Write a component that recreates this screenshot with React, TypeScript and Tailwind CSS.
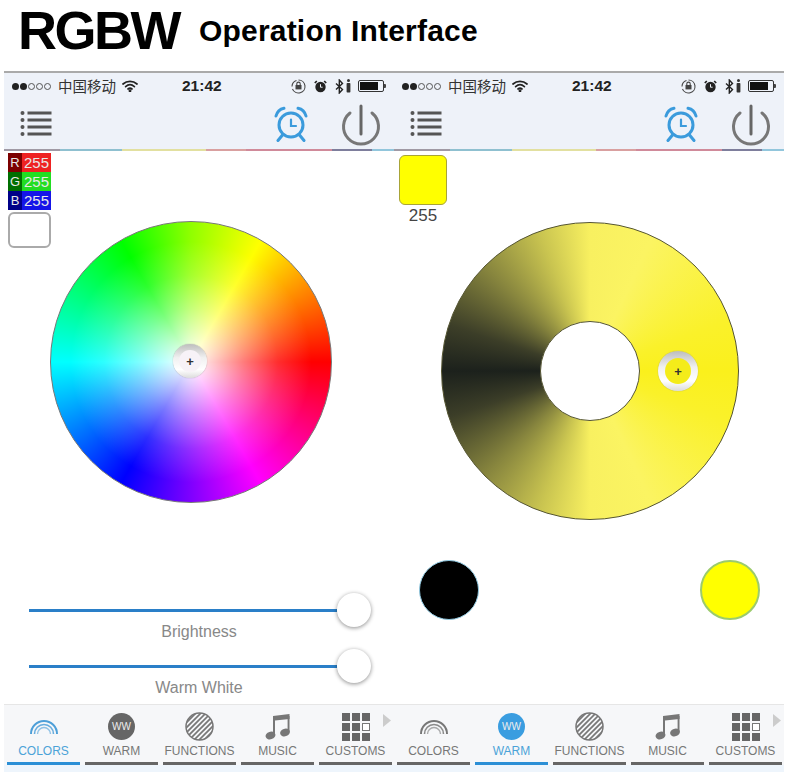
import React from "react";

const SANS = "font-['Liberation_Sans',Arial,sans-serif]";

function SignalDots() {
  return (
    <div className="flex items-center gap-[1px]">
      <span className="w-[7px] h-[7px] rounded-full bg-[#222]" />
      <span className="w-[7px] h-[7px] rounded-full bg-[#222]" />
      <span className="w-[7px] h-[7px] rounded-full border border-[#555]" />
      <span className="w-[7px] h-[7px] rounded-full border border-[#555]" />
      <span className="w-[7px] h-[7px] rounded-full border border-[#555]" />
    </div>
  );
}

function Wifi() {
  return (
    <svg width="16" height="12" viewBox="0 0 16 12" fill="none" stroke="#222" strokeWidth="1.7" strokeLinecap="round">
      <path d="M1 4 C5 0.5 11 0.5 15 4" />
      <path d="M3.6 6.6 C6.2 4.4 9.8 4.4 12.4 6.6" />
      <path d="M6 9 C7.2 8 8.8 8 10 9" />
      <circle cx="8" cy="10.8" r="0.6" fill="#222" />
    </svg>
  );
}

function StatusIcons() {
  return (
    <div className="flex items-center">
      <svg width="15" height="15" viewBox="0 0 15 15" fill="none" stroke="#444" strokeWidth="1.1">
        <path d="M7.5 1 A6.5 6.5 0 1 1 1.5 10" />
        <path d="M1 7.5 A6.5 6.5 0 0 1 5.5 1.4" />
        <rect x="4.5" y="6" width="6" height="4.4" fill="#444" stroke="none" />
        <path d="M5.8 6 V4.8 A1.7 1.7 0 0 1 9.2 4.8 V6" />
      </svg>
      <svg className="ml-[8px]" width="13" height="13" viewBox="0 0 13 13" fill="none">
        <circle cx="6.5" cy="7" r="5.2" fill="#222" />
        <path d="M0.8 3 L2.8 1 M12.2 3 L10.2 1" stroke="#222" strokeWidth="1.7" />
        <path d="M6.5 4.2 V7.2 H8.6" stroke="#eef2f9" strokeWidth="1" />
      </svg>
      <svg className="ml-[8px]" width="9" height="15" viewBox="0 0 9 15" fill="none" stroke="#222" strokeWidth="1.4">
        <path d="M1 4.5 L7.5 10.5 L4.3 14 V1 L7.5 4.5 L1 10.5" />
      </svg>
      <svg className="ml-[2px]" width="5" height="14" viewBox="0 0 5 14" fill="#333">
        <circle cx="2.5" cy="1.6" r="1.5" />
        <rect x="0.6" y="4" width="3.8" height="9.6" rx="0.8" />
      </svg>
      <div className="ml-[7px] flex items-center">
        <div className="w-[26px] h-[12px] rounded-[2px] border border-[#333] p-[1px]">
          <div className="w-[18px] h-full bg-[#111]" />
        </div>
        <span className="w-[2px] h-[4px] bg-[#444] rounded-r-[1px]" />
      </div>
    </div>
  );
}

function ListIcon() {
  return (
    <svg width="34" height="28" viewBox="0 0 34 28" fill="#555">
      {[3, 10, 17, 24].map((y) => (
        <g key={y}>
          <circle cx="3.5" cy={y} r="2" />
          <rect x="8.5" y={y - 1.5} width="24" height="3" />
        </g>
      ))}
    </svg>
  );
}

function AlarmIcon() {
  return (
    <svg width="36" height="36" viewBox="0 0 36 36" fill="none" stroke="#3b9bdc" strokeWidth="3" strokeLinecap="round">
      <circle cx="18" cy="19" r="12" />
      <path d="M3 10 C4 6 7 3 11 2.2" />
      <path d="M33 10 C32 6 29 3 25 2.2" />
      <path d="M9.5 29 L5 34.5 M26.5 29 L31 34.5" />
      <path d="M18 13.5 V20 H23" strokeWidth="2.2" />
    </svg>
  );
}

function PowerIcon() {
  return (
    <svg width="42" height="44" viewBox="0 0 42 44" fill="none" stroke="#777" strokeWidth="3" strokeLinecap="round">
      <path d="M10 9 A17.5 17.5 0 1 0 32 9" />
      <path d="M21 2 V30" stroke="#666" />
    </svg>
  );
}

function Rainbow({ color }: { color: string }) {
  return (
    <svg width="30" height="16" viewBox="0 0 30 16" fill="none" stroke={color}>
      <path d="M2 15 A13 13 0 0 1 28 15" strokeWidth="2" />
      <path d="M5.5 15 A9.5 9.5 0 0 1 24.5 15" strokeWidth="1.6" opacity="0.85" />
      <path d="M8.5 15 A6.5 6.5 0 0 1 21.5 15" strokeWidth="1.4" opacity="0.6" />
    </svg>
  );
}

function Stripes({ id }: { id: string }) {
  return (
    <svg width="29" height="29" viewBox="0 0 29 29" fill="none">
      <clipPath id={id}>
        <circle cx="14.5" cy="14.5" r="13.5" />
      </clipPath>
      <g clipPath={`url(#${id})`} stroke="#777" strokeWidth="1.7">
        {[-14, -9, -4, 1, 6, 11, 16, 21, 26].map((o) => (
          <path key={o} d={`M${o - 6} 32 L${o + 26} 0`} />
        ))}
      </g>
      <circle cx="14.5" cy="14.5" r="13.5" stroke="#777" strokeWidth="1.5" />
    </svg>
  );
}

function Music() {
  return (
    <svg width="26" height="27" viewBox="0 0 26 27" fill="#777">
      <path d="M8 3 L24.5 1 V6 L10 7.5 V22 H8 Z" />
      <path d="M22.6 3 H24.5 V19 H22.6 Z" />
      <ellipse cx="5.5" cy="22.5" rx="5" ry="3.8" transform="rotate(-18 5.5 22.5)" />
      <ellipse cx="20" cy="19.5" rx="5" ry="3.8" transform="rotate(-18 20 19.5)" />
    </svg>
  );
}

function GridIcon() {
  const cells = [0, 1, 2, 3, 4, 5, 6, 7, 8];
  return (
    <div className="grid grid-cols-[8px_8px_8px] gap-[2px]">
      {cells.map((c) => (
        <span key={c} className={c === 5 ? "h-[8px] border border-[#777] bg-white" : "h-[8px] bg-[#666]"} />
      ))}
    </div>
  );
}

function TabBar({ active, uid }: { active: number; uid: string }) {
  const labels = ["COLORS", "WARM", "FUNCTIONS", "MUSIC", "CUSTOMS"];
  const icons = [
    <Rainbow key="r" color={active === 0 ? "#4d9fd8" : "#777"} />,
    <div
      key="w"
      className={`w-[27px] h-[27px] rounded-full flex items-center justify-center text-[10px] text-[#eee] ${SANS} ${
        active === 1 ? "bg-[#3a9de0]" : "bg-[#666]"
      }`}
    >
      WW
    </div>,
    <Stripes key="s" id={uid} />,
    <Music key="m" />,
    <GridIcon key="g" />,
  ];
  return (
    <div className="relative h-[61px] bg-[#f6f7f9] border-t border-[#e6e6e6] pl-[3px] grid grid-cols-[repeat(5,73px)] gap-x-[5px]">
      {labels.map((label, i) => (
        <div key={label} className="flex flex-col items-center">
          <div className="h-[29px] mt-[7px] flex items-center justify-center">{icons[i]}</div>
          <div
            className={`mt-[2px] h-[16px] leading-[16px] whitespace-nowrap text-[12px] ${SANS} ${
              i === active ? "text-[#4ba3d8]" : "text-[#777]"
            }`}
          >
            {label}
          </div>
          <div className={`mt-[3px] w-full h-[3px] ${i === active ? "bg-[#2b8fd6]" : "bg-[#666]"}`} />
        </div>
      ))}
      <svg className="absolute right-[3px] top-[9px]" width="8" height="13" viewBox="0 0 8 13" fill="#ccc">
        <path d="M0 0 L8 6.5 L0 13 Z" />
      </svg>
    </div>
  );
}

function RainbowLine() {
  return (
    <div className="flex h-[2px]">
      <div className="w-[56px] bg-[#a09aa5]" />
      <div className="w-[62px] bg-[#8fc0d0]" />
      <div className="w-[84px] bg-[#e2e0a0]" />
      <div className="w-[40px] bg-[#d9a0a0]" />
      <div className="w-[86px] bg-[#d08a9a]" />
      <div className="w-[40px] bg-[#7e7e9c]" />
      <div className="flex-1 bg-[#92c6dc]" />
    </div>
  );
}

function Header() {
  return (
    <div className="bg-[#eef2f9] border-t-2 border-[#aaa]">
      <div className="h-[26px] flex items-center pl-[8px] pr-[8px]">
        <SignalDots />
        <span className="ml-[7px] text-[14.5px] leading-none text-[#333] font-['Noto_Sans_CJK_SC',sans-serif]">中国移动</span>
        <span className="ml-[6px]">
          <Wifi />
        </span>
        <span className={`ml-[44px] text-[15.5px] font-bold text-[#222] ${SANS}`}>21:42</span>
        <span className="ml-auto">
          <StatusIcons />
        </span>
      </div>
      <div className="h-[50px] flex items-center pl-[15px] pr-[12px]">
        <ListIcon />
        <span className="ml-auto">
          <AlarmIcon />
        </span>
        <span className="ml-[31px] mt-[3px]">
          <PowerIcon />
        </span>
      </div>
      <RainbowLine />
    </div>
  );
}

function Readout() {
  const rows = [
    ["R", "bg-[#7c0000]", "bg-[#ee2222]"],
    ["G", "bg-[#006f00]", "bg-[#22dd22]"],
    ["B", "bg-[#000088]", "bg-[#1515e8]"],
  ];
  return (
    <div className={`w-[43px] shrink-0 ml-[4px] ${SANS}`}>
      {rows.map(([c, dark, light]) => (
        <div key={c} className="flex h-[19px] leading-[19px] text-[15px] text-[#e8e8e8]">
          <span className={`w-[14px] text-center text-[13px] ${dark}`}>{c}</span>
          <span className={`flex-1 text-center ${light}`}>255</span>
        </div>
      ))}
      <div className="mt-[2px] h-[36px] rounded-[6px] border-2 border-[#aaa] bg-white" />
    </div>
  );
}

function Thumb({ box, inner, color }: { box: string; inner: string; color: string }) {
  return (
    <div
      className={`absolute ${box} rounded-full flex items-center justify-center bg-[linear-gradient(180deg,#bdbdbd,#f0f0f0_40%,#ffffff_75%,#dcdcdc)] shadow-[0_0_1px_#888]`}
    >
      <div className={`${inner} ${color} rounded-full flex items-center justify-center text-[13px] leading-none font-bold text-[#333] ${SANS}`}>
        +
      </div>
    </div>
  );
}

function Slider({ label, gap }: { label: string; gap: string }) {
  return (
    <div className={gap}>
      <div className="flex items-center ml-[25px] w-[342px]">
        <div className="flex-1 h-[3px] bg-[#2a7fc8]" />
        <div className="w-[34px] h-[34px] rounded-full bg-white shadow-[0_1px_4px_rgba(0,0,0,0.45)]" />
      </div>
      <div className={`-mt-[5px] ml-[25px] w-[340px] h-[20px] leading-[20px] text-center text-[16px] text-[#888] ${SANS}`}>{label}</div>
    </div>
  );
}

function ColorPage() {
  return (
    <div className="flex-1">
      <div className="flex pt-[2px]">
        <Readout />
        <div className="relative -ml-[1px] mt-[68px] w-[282px] h-[282px] rounded-full border-[1.5px] border-[#777] bg-[radial-gradient(circle_closest-side,#ffffff_0%,rgba(255,255,255,0.8)_15%,rgba(255,255,255,0.48)_38%,rgba(255,255,255,0.18)_62%,rgba(255,255,255,0)_86%),conic-gradient(#90ff00,#ffff00_30deg,#ff0000_90deg,#ff00ff_150deg,#0000ff_210deg,#00ffff_270deg,#00ff00_330deg,#90ff00)]">
          <Thumb box="left-[122px] top-[122px] w-[34px] h-[34px]" inner="w-[22px] h-[22px]" color="bg-[#f7f2f7]" />
        </div>
      </div>
      <Slider label="Brightness" gap="mt-[90px]" />
      <Slider label="Warm White" gap="mt-[7px]" />
    </div>
  );
}

function WarmPage() {
  return (
    <div className="flex-1">
      <div className="flex pt-[4px]">
        <div className="w-[48px] shrink-0 ml-[5px]">
          <div className="h-[50px] rounded-[6px] border-[1.5px] border-[#a8a438] bg-[#ffff00]" />
          <div className={`mt-[1px] text-center text-[17px] leading-[20px] text-[#444] ${SANS}`}>255</div>
        </div>
        <div className="relative -ml-[6px] mt-[67px] w-[298px] h-[298px] rounded-full border-[1.5px] border-[#555532] flex items-center justify-center bg-[conic-gradient(#f8f060,#fbf462_25deg,#faf12a_70deg,#faf01c_90deg,#faf12a_110deg,#fbf462_155deg,#f8f060_180deg,#c9c450_200deg,#88863e_225deg,#3c3e28_252deg,#1c211c_270deg,#3c3e28_288deg,#88863e_315deg,#c9c450_340deg,#f8f060)]">
          <div className="w-[100px] h-[100px] rounded-full bg-white border-[1.5px] border-[#555532]" />
          <Thumb box="left-[216px] top-[128px] w-[40px] h-[40px]" inner="w-[26px] h-[26px]" color="bg-[#f4ec1a]" />
        </div>
      </div>
      <div className="mt-[40px] ml-[25px] w-[341px] flex justify-between">
        <div className="w-[60px] h-[60px] rounded-full bg-black border border-[#8fc8e0]" />
        <div className="w-[60px] h-[60px] rounded-full bg-[#ffff00] border-2 border-[#9ccb6c]" />
      </div>
    </div>
  );
}

function Phone({ active, uid, children }: { active: number; uid: string; children: React.ReactNode }) {
  return (
    <div className="w-[390px] h-[701px] flex flex-col bg-white">
      <Header />
      {children}
      <TabBar active={active} uid={uid} />
      <div className="h-[7px] bg-[#eef5fc]" />
    </div>
  );
}

export default function App() {
  return (
    <div className="w-[800px] h-[772px] bg-white overflow-hidden">
      <div className={`h-[71px] flex items-start pl-[18px] text-black font-bold ${SANS}`}>
        <span className="mt-[0px] text-[54px] leading-[60px] tracking-[-2.5px]">RGBW</span>
        <span className="ml-[20px] mt-[13px] text-[30px] leading-[36px] tracking-[0.2px]">Operation Interface</span>
      </div>
      <div className="flex pl-[4px]">
        <Phone active={0} uid="stripes-a">
          <ColorPage />
        </Phone>
        <Phone active={1} uid="stripes-b">
          <WarmPage />
        </Phone>
      </div>
    </div>
  );
}
